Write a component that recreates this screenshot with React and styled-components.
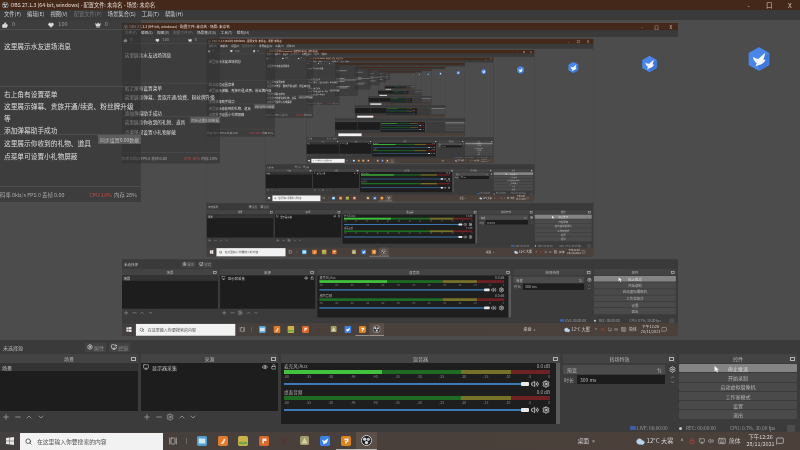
import React from "react";
import styled, { createGlobalStyle } from "styled-components";
import {
  ChevronDown,
  ChevronUp,
  Cloud,
  Crown,
  Eye,
  GalleryHorizontal,
  Heart,
  Keyboard,
  Lock,
  MessageSquare,
  Minus,
  Monitor,
  MonitorDot,
  Plus,
  Search,
  Settings,
  ThumbsUp,
  Volume2,
} from "lucide-react";

const CAPTURE_DEPTH = 9;

const GlobalStyle = createGlobalStyle`
  html, body {
    margin: 0;
    width: 800px;
    height: 450px;
    overflow: hidden;
    background: #3a3a3a;
  }
`;

const Screen = styled.div`
  width: 800px;
  height: 450px;
  overflow: hidden;
  filter: blur(0.74px);
`;

const Window = styled.div`
  width: 800px;
  height: 450px;
  display: flex;
  flex-direction: column;
  background: #3b3b3b;
  color: #d4d4d4;
  font-family: "Noto Sans CJK SC", "Liberation Sans", sans-serif;
  font-size: 5px;
  line-height: 1;
`;

const TitleBar = styled.div`
  height: 9.5px;
  flex: none;
  display: flex;
  align-items: center;
  gap: 2px;
  padding: 0 1px 0 2px;
  background: #44281a;
  color: #e6ddd6;
  font-size: 5.2px;
`;

const TitleText = styled.span`
  flex: 1;
  white-space: nowrap;
`;

const WindowButton = styled.span`
  width: 18.5px;
  text-align: center;
  font-size: 6.5px;
  color: #cfc6c0;
`;

const MenuBar = styled.div`
  height: 10.5px;
  flex: none;
  display: flex;
  align-items: center;
  gap: 6px;
  padding-left: 4px;
  background: #3a3a3a;
  font-size: 5.3px;
`;

const MenuItem = styled.span`
  color: ${(p) => (p.$disabled ? "#777" : "#cfcfcf")};
  white-space: nowrap;
`;

const Preview = styled.div`
  position: relative;
  flex: 1;
  background: #4c4c4c;
`;

const NestedCapture = styled.div`
  position: absolute;
  left: 122px;
  top: 3px;
  width: 800px;
  height: 450px;
  transform: scale(0.695);
  transform-origin: 0 0;
`;

const BirdBadge = styled.svg`
  position: absolute;
  left: 748px;
  top: 27px;
  width: 22px;
  height: 24px;
`;

const ChatOverlay = styled.div`
  position: absolute;
  left: 0;
  top: 0;
  width: 141px;
  height: 182px;
  display: flex;
  flex-direction: column;
  background: rgba(48, 48, 48, 0.52);
  color: #dedede;
`;

const ChatStats = styled.div`
  height: 10px;
  flex: none;
  box-sizing: border-box;
  display: flex;
  align-items: center;
  padding-left: 2px;
  border-bottom: 1px solid #4d4d4d;
  color: #9c9c9c;
  font-size: 5.5px;
`;

const ChatStat = styled.span`
  width: 47px;
  display: flex;
  align-items: center;
  gap: 4px;
`;

const ChatSection = styled.div`
  flex: none;
  height: ${(p) => p.$height}px;
  box-sizing: border-box;
  padding: ${(p) => p.$pad}px 0 0 4px;
  border-bottom: 1px solid #4d4d4d;
  font-size: 6.7px;
`;

const ChatLine = styled.div`
  height: ${(p) => p.$height || 12}px;
  line-height: 12px;
  white-space: nowrap;
`;

const ChatBlur = styled.div`
  width: ${(p) => p.$width}px;
  height: 5px;
  margin-top: 4px;
  background: #8a8a8a;
`;

const ChatFooter = styled.div`
  flex: 1;
  display: flex;
  align-items: center;
  padding: 3px 4px 0 0;
  font-size: 5.4px;
  color: #a8a8a8;
`;

const FooterRate = styled.span`
  flex: 1;
  white-space: nowrap;
`;

const FooterCpu = styled.span`
  color: #c24a42;
  margin-right: 2px;
`;

const SyncTip = styled.div`
  position: absolute;
  left: 98px;
  top: 115px;
  width: 43px;
  height: 9px;
  display: flex;
  align-items: center;
  justify-content: center;
  background: #5c5c5c;
  color: #bcbcbc;
  font-size: 5px;
`;

const ContextBar = styled.div`
  height: 14px;
  flex: none;
  display: flex;
  align-items: center;
  padding-left: 3px;
  background: #3a3a3a;
  color: #b8b8b8;
`;

const ContextLabel = styled.span`
  width: 82px;
`;

const ContextButton = styled.span`
  width: 21px;
  height: 9px;
  margin-right: 3px;
  display: flex;
  align-items: center;
  justify-content: center;
  gap: 1px;
  background: #434343;
  border-radius: 1px;
  color: #8d8d8d;
`;

const Docks = styled.div`
  height: 70px;
  flex: none;
  display: grid;
  grid-template-columns: 138px 137px 279px 113px 118px;
  column-gap: 3px;
  padding-right: 2px;
  background: #3b3b3b;
`;

const Dock = styled.div`
  display: flex;
  flex-direction: column;
  min-width: 0;
`;

const DockHeader = styled.div`
  position: relative;
  height: 9px;
  flex: none;
  display: flex;
  align-items: center;
  justify-content: center;
  background: #434343;
  color: #b4b4b4;
`;

const DockFloat = styled.span`
  position: absolute;
  right: 2px;
  top: 3px;
  width: 3px;
  height: 2px;
  border: 0.5px solid #b4b4b4;
`;

const ListBox = styled.div`
  height: 48px;
  flex: none;
  background: #1d1d1d;
`;

const ListRow = styled.div`
  height: 8px;
  display: flex;
  align-items: center;
  gap: 3px;
  padding: 0 2px;
  color: #c4c4c4;
  background: ${(p) => (p.$selected ? "#333" : "transparent")};
`;

const RowName = styled.span`
  flex: 1;
`;

const Toolbar = styled.div`
  height: 11px;
  display: flex;
  align-items: center;
  gap: 3.5px;
  padding-left: 2px;
  color: #a4a4a4;
`;

const MixerBody = styled.div`
  flex: 1;
  display: flex;
  flex-direction: column;
  gap: 2px;
  padding: 1px 6px 0 3px;
  background: #1e1e1e;
  border-right: 4px solid #5b5b5b;
`;

const Channel = styled.div`
  display: flex;
  flex-direction: column;
  height: 24px;
`;

const ChannelHead = styled.div`
  display: flex;
  justify-content: space-between;
  height: 6px;
  font-size: 4.6px;
  color: #aaa;
`;

const Meter = styled.div`
  display: flex;
  height: 4px;
  background: #111;
`;

const MeterSegment = styled.div`
  width: ${(p) => p.$width}px;
  background: ${(p) => p.$color};
`;

const MeterScale = styled.div`
  display: flex;
  justify-content: space-between;
  height: 5px;
  padding-top: 1px;
  box-sizing: border-box;
  font-size: 3.4px;
  color: #8a8a8a;
`;

const FaderRow = styled.div`
  display: flex;
  align-items: center;
  height: 9px;
  gap: 3px;
  color: #ddd;
`;

const FaderTrack = styled.div`
  position: relative;
  flex: 1;
  height: 2px;
  background: #3d7ab5;
`;

const FaderThumb = styled.span`
  position: absolute;
  right: -1px;
  top: -1px;
  width: 8px;
  height: 4px;
  border-radius: 1px;
  background: #e8e8e8;
`;

const TransitionBody = styled.div`
  flex: 1;
  display: grid;
  grid-template-columns: 14px 1fr 8px;
  grid-template-rows: 9px 9px;
  row-gap: 1px;
  padding-top: 2px;
  align-items: center;
  color: #a8a8a8;
`;

const TransitionSelect = styled.div`
  grid-column: 1 / 3;
  height: 9px;
  display: flex;
  align-items: center;
  justify-content: space-between;
  margin-right: 3px;
  padding: 0 3px 0 4px;
  background: #4c4c4c;
  color: #b8b8b8;
`;

const DurationLabel = styled.span`
  padding-left: 1px;
`;

const DurationInput = styled.div`
  height: 9px;
  display: flex;
  align-items: center;
  margin-right: 3px;
  padding-left: 3px;
  background: #1c1c1c;
  color: #b8b8b8;
`;

const SpinArrows = styled.div`
  display: flex;
  flex-direction: column;
  align-items: center;
  height: 9px;
  color: #a4a4a4;
`;

const GearSlot = styled.div`
  display: flex;
  justify-content: center;
  color: #c8c8c8;
`;

const ControlStack = styled.div`
  display: flex;
  flex-direction: column;
  gap: 1px;
  padding-top: 1px;
`;

const ControlButton = styled.div`
  position: relative;
  height: 8.3px;
  display: flex;
  align-items: center;
  justify-content: center;
  background: ${(p) => (p.$hover ? "#848484" : "#4a4a4a")};
  border-radius: 1px;
  color: ${(p) => (p.$hover ? "#d8d8d8" : "#b4b4b4")};
`;

const Pointer = styled.svg`
  position: absolute;
  left: 35px;
  top: 1.5px;
  width: 5px;
  height: 7px;
`;

const StatusBar = styled.div`
  height: 8px;
  flex: none;
  display: flex;
  align-items: center;
  padding-left: 630px;
  background: #3b3b3b;
  color: #9a9a9a;
  font-size: 4.8px;
  white-space: nowrap;
`;

const LiveBadge = styled.span`
  width: 6px;
  height: 4px;
  margin-right: 1px;
  background: #3a5fa8;
  border-radius: 1px;
`;

const StatusField = styled.span`
  width: ${(p) => p.$width}px;
  flex: none;
`;

const RecDot = styled.span`
  width: 3px;
  height: 3px;
  margin-right: 4px;
  border-radius: 50%;
  background: #c8c8c8;
`;

const StatusBox = styled.span`
  width: 8px;
  height: 7px;
  background: #4c4c4c;
`;

const Taskbar = styled.div`
  height: 18px;
  flex: none;
  display: flex;
  align-items: center;
  background: linear-gradient(90deg, #423f3e, #4a403b 45%, #4b403a);
  color: #d8d8d8;
`;

const StartSlot = styled.div`
  width: 20px;
  display: flex;
  justify-content: center;
`;

const SearchBox = styled.div`
  width: 143px;
  height: 17px;
  margin-top: 1px;
  display: flex;
  align-items: center;
  gap: 5px;
  padding-left: 5px;
  box-sizing: border-box;
  background: #f2f2f2;
  color: #555;
  font-size: 5.8px;
`;

const TaskViewSlot = styled.div`
  width: 20px;
  display: flex;
  justify-content: center;
  color: #c8c8c8;
`;

const TaskDivider = styled.div`
  width: 9px;
  height: 6px;
  box-sizing: border-box;
  border-left: 1px solid #6a6a6a;
  margin-left: 3px;
  margin-right: -3px;
`;

const AppSlot = styled.div`
  width: 20.5px;
  height: 18px;
  display: flex;
  align-items: center;
  justify-content: center;
  box-sizing: border-box;
  border-bottom: 1px solid ${(p) => (p.$running ? "#b9b4b0" : "transparent")};
  background: ${(p) => (p.$focused ? "#5b4f49" : "transparent")};
`;

const AppTile = styled.svg`
  width: ${(p) => p.$size || 10}px;
  height: ${(p) => p.$size || 10}px;
`;

const RightGroup = styled.div`
  margin-left: 201px;
  display: flex;
  align-items: center;
`;

const ShowDesktop = styled.div`
  width: 58px;
  display: flex;
  gap: 3px;
  align-items: center;
  font-size: 5.8px;
  color: #c8c8c8;
`;

const Weather = styled.div`
  width: 45px;
  display: flex;
  align-items: center;
  gap: 2px;
  font-size: 6.2px;
  color: #d8d8d8;
`;

const TrayIcons = styled.div`
  width: 65px;
  display: flex;
  align-items: center;
  gap: 3.5px;
  color: #c8c8c8;
  font-size: 5.8px;
`;

const TrayCaret = styled.span`
  width: 5px;
`;

const Clock = styled.div`
  width: 30px;
  display: flex;
  flex-direction: column;
  align-items: center;
  gap: 2px;
  font-size: 5.4px;
  white-space: nowrap;
`;

const ObsLogo = ({ size = 8 }) => (
  <svg width={size} height={size} viewBox="0 0 24 24">
    <circle cx="12" cy="12" r="11" fill="#1c1c1c" stroke="#d6d6d6" strokeWidth="2" />
    <circle cx="8" cy="9" r="3.6" fill="#d6d6d6" />
    <circle cx="16" cy="9.5" r="3.6" fill="#bdbdbd" />
    <circle cx="12" cy="16.5" r="3.6" fill="#e0e0e0" />
  </svg>
);

const WindowsLogo = () => (
  <svg width="8" height="8" viewBox="0 0 8 8" fill="#e8e8e8">
    <path d="M0 1.1 3.6.6v3.2H0zM4 .5 8 0v3.8H4zM0 4.2h3.6v3.2L0 6.9zM4 4.2h4V8l-4-.6z" />
  </svg>
);

const BirdHex = () => (
  <BirdBadge viewBox="0 0 24 26">
    <path d="M12 1 22.5 7v12L12 25 1.5 19V7z" fill="#4a86ea" stroke="#4a86ea" strokeWidth="1.6" strokeLinejoin="round" />
    <path d="M22.5 7v12L12 25V13z" fill="#3f78dc" />
    <path d="M5.5 10.5c2 1.6 4 2.4 6 2.2L18.5 6.5c-.2 3-.9 5.4-1.8 7.3h2.6c-1.6 3.2-4.2 5.2-7.6 5.8L8 21.2l1.6-3.6C7.2 15.8 5.8 13.4 5.5 10.5z" fill="#f4f8ff" />
  </BirdBadge>
);

const DOCK_ICON = { size: 8, strokeWidth: 2.2 };

const DockTitle = ({ children }) => (
  <DockHeader>
    {children}
    <DockFloat />
  </DockHeader>
);

const SCALE_MARKS = ["-60", "-55", "-50", "-45", "-40", "-35", "-30", "-25", "-20", "-15", "-10", "-5", "0"];

const ChannelMeter = ({ live }) => (
  <Meter>
    {live && <MeterSegment $width={99} $color="#42c23e" />}
    <MeterSegment $width={live ? 81 : 180} $color="#1f6b24" />
    <MeterSegment $width={50} $color="#77722a" />
    <MeterSegment $width={40} $color="#6f2226" />
  </Meter>
);

const MixerChannel = ({ name, live, marks }) => (
  <Channel>
    <ChannelHead>
      <span>{name}</span>
      <span>{name && "0.0 dB"}</span>
    </ChannelHead>
    <ChannelMeter live={live} />
    <MeterScale>{marks && SCALE_MARKS.map((mark) => <span key={mark}>{mark}</span>)}</MeterScale>
    <FaderRow>
      <FaderTrack>
        <FaderThumb />
      </FaderTrack>
      <Volume2 size={8} strokeWidth={2.4} />
      <Settings size={8} strokeWidth={2.6} />
    </FaderRow>
  </Channel>
);

const CONTROLS = ["停止推流", "开始录制", "启动虚拟摄像机", "工作室模式", "设置", "退出"];

const MENUS = ["文件(F)", "编辑(E)", "视图(V)", "配置文件(P)", "场景集合(S)", "工具(T)", "帮助(H)"];

const TASK_APPS = [
  { color: "#4f9fd0", mark: "M2 3h8v6H2z", markColor: "#cfe6f4" },
  { color: "#e07a2e", mark: "M3 9c2-1 3-3 4-6l2 1c-1 3-2 5-4 6z", markColor: "#f8e0c0" },
  { color: "#c9b24a", mark: "M1 7h10v3H1z", markColor: "#6fa84a" },
  { color: "#d9682c", mark: "M4 3h5v3H6v3H4z", markColor: "#f6e6d6" },
  { color: "#4d3a36", size: 6 },
  { color: "#a39a6a", size: 9, mark: "M6 2 10 10H2z", markColor: "#d8d2a8" },
  { color: "#3f82e6", mark: "M2.5 4.5c1 .8 2 1.2 3 1.1L9.5 3c0 3-1 6-5 6.5L3.5 10l.7-2C3.2 7 2.6 5.8 2.5 4.5z", markColor: "#f4f8ff" },
  { color: "#d9821f", running: true, mark: "M4 3h5v4H7v2H5V6h2V5H4z", markColor: "#f8ead6" },
];

const AppIcon = ({ app }) => (
  <AppTile $size={app.size} viewBox="0 0 12 12">
    <rect width="12" height="12" rx="2" fill={app.color} />
    {app.mark && <path d={app.mark} fill={app.markColor} />}
  </AppTile>
);

const ChatPanel = ({ outermost }) => (
  <ChatOverlay>
    <ChatStats>
      <ChatStat>
        <ThumbsUp size={6} fill="#ddd" color="#ddd" />0
      </ChatStat>
      <ChatStat>
        <Heart size={6} fill="#ddd" color="#ddd" />
        100
      </ChatStat>
      <ChatStat>
        <Crown size={6} fill="#ddd" color="#ddd" />0
      </ChatStat>
    </ChatStats>
    <ChatSection $height={57} $pad={10}>
      <ChatLine>这里展示水友进场消息</ChatLine>
    </ChatSection>
    <ChatSection $height={48} $pad={1}>
      <ChatLine>右上角有设置菜单</ChatLine>
      <ChatLine>这里展示弹幕、贵族开通/续费、粉丝牌升级</ChatLine>
      <ChatLine>{outermost && "等"}</ChatLine>
      <ChatLine>添加弹幕助手成功</ChatLine>
    </ChatSection>
    <ChatSection $height={52} $pad={2}>
      <ChatLine $height={13}>这里展示你收到的礼物、道具</ChatLine>
      <ChatLine>点菜单可设置小礼物屏蔽</ChatLine>
    </ChatSection>
    <ChatFooter>
      <FooterRate>码率 0kb/s FPS 0 丢帧 0.00</FooterRate>
      <FooterCpu>CPU 10%</FooterCpu>
      <span>内存 28%</span>
    </ChatFooter>
    <SyncTip>同步设置0.00数据</SyncTip>
  </ChatOverlay>
);

// far down the capture chain the text is under a pixel tall, so only the blocks are kept
const FarCapture = ({ depth }) => (
  <Window>
    <TitleBar />
    <MenuBar />
    <Preview>
      {depth > 0 && (
        <NestedCapture>
          <FarCapture depth={depth - 1} />
        </NestedCapture>
      )}
      <BirdHex />
      <ChatOverlay>
        <ChatStats />
        <ChatSection $height={57} $pad={10}>
          <ChatBlur $width={66} />
        </ChatSection>
        <ChatSection $height={48} $pad={1}>
          <ChatBlur $width={54} />
          <ChatBlur $width={128} />
          <ChatBlur $width={54} />
        </ChatSection>
        <ChatSection $height={52} $pad={2}>
          <ChatBlur $width={86} />
          <ChatBlur $width={72} />
        </ChatSection>
      </ChatOverlay>
    </Preview>
    <ContextBar />
    <Docks>
      <Dock>
        <DockHeader />
        <ListBox />
      </Dock>
      <Dock>
        <DockHeader />
        <ListBox />
      </Dock>
      <Dock>
        <DockHeader />
        <MixerBody>
          <MixerChannel live />
          <MixerChannel />
        </MixerBody>
      </Dock>
      <Dock>
        <DockHeader />
      </Dock>
      <Dock>
        <DockHeader />
        <ControlStack>
          {CONTROLS.map((label, i) => (
            <ControlButton key={label} $hover={i === 0} />
          ))}
        </ControlStack>
      </Dock>
    </Docks>
    <StatusBar />
    <Taskbar>
      <StartSlot />
      <SearchBox />
    </Taskbar>
  </Window>
);

const ObsWindow = ({ depth }) => (
  <Window>
    <TitleBar>
      <ObsLogo size={6.5} />
      <TitleText>OBS 27.1.3 (64-bit, windows) - 配置文件: 未命名 - 场景: 未命名</TitleText>
      <WindowButton>-</WindowButton>
      <WindowButton>口</WindowButton>
      <WindowButton>X</WindowButton>
    </TitleBar>
    <MenuBar>
      {MENUS.map((menu) => (
        <MenuItem key={menu} $disabled={menu.startsWith("配置")}>
          {menu}
        </MenuItem>
      ))}
    </MenuBar>
    <Preview>
      <NestedCapture>
        {depth > 5 ? <ObsWindow depth={depth - 1} /> : <FarCapture depth={depth - 1} />}
      </NestedCapture>
      <BirdHex />
      <ChatPanel outermost={depth === CAPTURE_DEPTH} />
    </Preview>
    <ContextBar>
      <ContextLabel>未选择源</ContextLabel>
      <ContextButton>
        <Settings size={6} strokeWidth={3} color="#ccc" />
        属性
      </ContextButton>
      <ContextButton>
        <MonitorDot size={6} strokeWidth={3} color="#ccc" />
        滤镜
      </ContextButton>
    </ContextBar>
    <Docks>
      <Dock>
        <DockTitle>场景</DockTitle>
        <ListBox>
          <ListRow $selected>场景</ListRow>
        </ListBox>
        <Toolbar>
          <Plus {...DOCK_ICON} />
          <Minus {...DOCK_ICON} />
          <ChevronUp {...DOCK_ICON} />
          <ChevronDown {...DOCK_ICON} />
        </Toolbar>
      </Dock>
      <Dock>
        <DockTitle>来源</DockTitle>
        <ListBox>
          <ListRow>
            <Monitor size={6} strokeWidth={2.4} />
            <RowName>显示器采集</RowName>
            <Eye size={6} strokeWidth={2.6} />
            <Lock size={5.5} strokeWidth={2.6} />
          </ListRow>
        </ListBox>
        <Toolbar>
          <Plus {...DOCK_ICON} />
          <Minus {...DOCK_ICON} />
          <Settings {...DOCK_ICON} />
          <ChevronUp {...DOCK_ICON} />
          <ChevronDown {...DOCK_ICON} />
        </Toolbar>
      </Dock>
      <Dock>
        <DockTitle>混音器</DockTitle>
        <MixerBody>
          <MixerChannel name="麦克风/Aux" live marks={depth > 6} />
          <MixerChannel name="桌面音频" marks={depth > 6} />
        </MixerBody>
      </Dock>
      <Dock>
        <DockTitle>转场特效</DockTitle>
        <TransitionBody>
          <TransitionSelect>
            渐变
            <span>⇅</span>
          </TransitionSelect>
          <GearSlot>
            <Settings size={7} strokeWidth={2.8} />
          </GearSlot>
          <DurationLabel>时长</DurationLabel>
          <DurationInput>300 ms</DurationInput>
          <SpinArrows>
            <ChevronUp size={5} strokeWidth={3} />
            <ChevronDown size={5} strokeWidth={3} />
          </SpinArrows>
        </TransitionBody>
      </Dock>
      <Dock>
        <DockTitle>控件</DockTitle>
        <ControlStack>
          {CONTROLS.map((label, i) => (
            <ControlButton key={label} $hover={i === 0}>
              {label}
              {i === 0 && (
                <Pointer viewBox="0 0 10 14">
                  <path d="M1 0v11l3-2.6L6 13l2-1-2-4.4h4z" fill="#f4f4f4" />
                </Pointer>
              )}
            </ControlButton>
          ))}
        </ControlStack>
      </Dock>
    </Docks>
    <StatusBar>
      <LiveBadge />
      <StatusField $width={42}>LIVE: 00:00:00</StatusField>
      <RecDot />
      <StatusField $width={44}>REC: 00:00:00</StatusField>
      <StatusField $width={57}>CPU: 0.7%, 30.00 fps</StatusField>
      <StatusBox />
    </StatusBar>
    <Taskbar>
      <StartSlot>
        <WindowsLogo />
      </StartSlot>
      <SearchBox>
        <Search size={7} strokeWidth={2.4} color="#333" />
        在这里输入你要搜索的内容
      </SearchBox>
      <TaskViewSlot>
        <GalleryHorizontal size={8} strokeWidth={2} />
      </TaskViewSlot>
      <TaskDivider />
      {TASK_APPS.map((app, i) => (
        <AppSlot key={i} $running={app.running}>
          <AppIcon app={app} />
        </AppSlot>
      ))}
      <AppSlot $running $focused>
        <ObsLogo size={11} />
      </AppSlot>
      <RightGroup>
        <ShowDesktop>
          桌面
          <span>»</span>
        </ShowDesktop>
        <Weather>
          <Cloud size={9} fill="#b9d6ee" color="#b9d6ee" />
          12°C 大雾
        </Weather>
        <TrayIcons>
          <TrayCaret>^</TrayCaret>
          <Lock size={6} color="#d0453c" />
          <Monitor size={6} />
          <Volume2 size={6} />
          <Keyboard size={8} />
          简体
        </TrayIcons>
        <Clock>
          <span>下午12:26</span>
          <span>28/11/2021</span>
        </Clock>
        <MessageSquare size={8} />
      </RightGroup>
    </Taskbar>
  </Window>
);

export default function App() {
  return (
    <Screen>
      <GlobalStyle />
      <ObsWindow depth={CAPTURE_DEPTH} />
    </Screen>
  );
}
